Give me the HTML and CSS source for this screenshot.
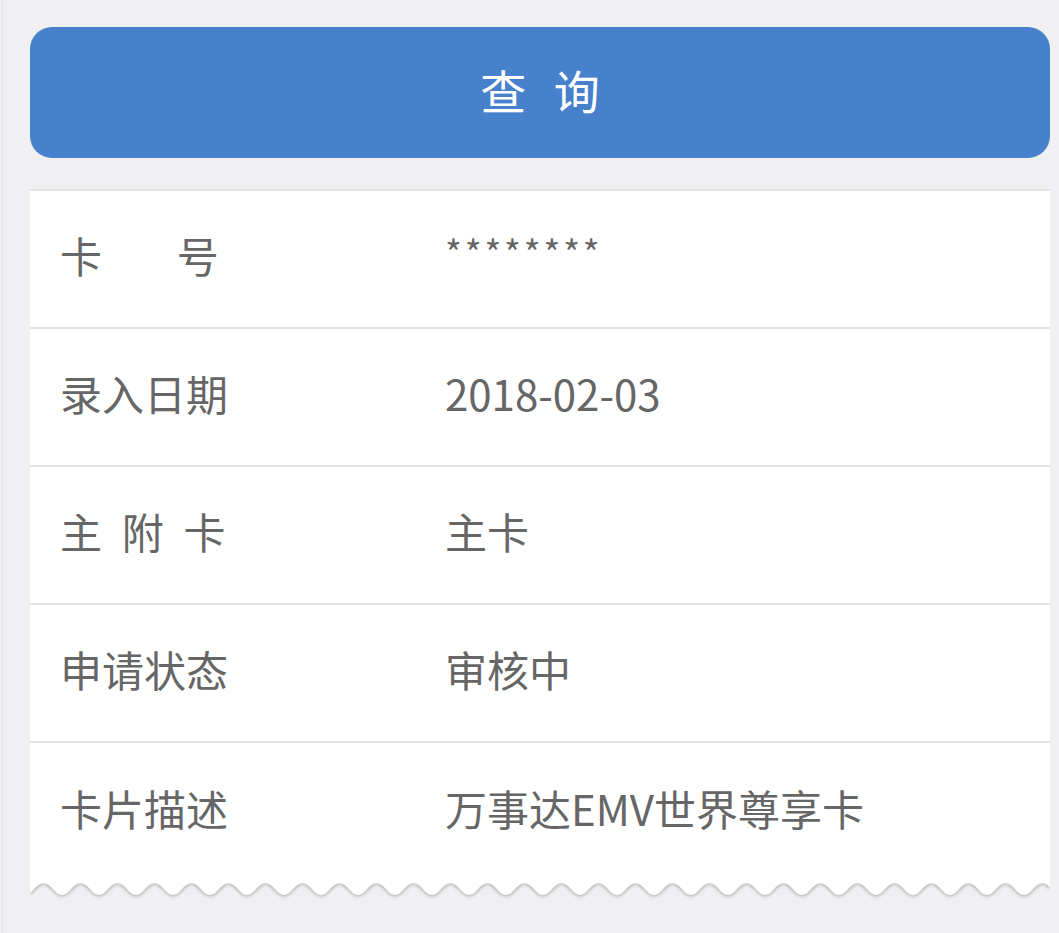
FILE: index.html
```html
<!DOCTYPE html>
<html lang="zh-CN">
<head>
  <meta charset="UTF-8" />
  <meta name="viewport" content="width=device-width, initial-scale=1.0"/>
  <title>申请进度查询</title>
  <link rel="stylesheet" href="styles.css">
</head>
<body>
  <div class="page">

    <button class="query-btn">查询</button>

    <!-- Result card -->
    <div class="card">
      <div class="row">
        <span class="label label-wide">卡号</span>
        <span class="value value-stars">********</span>
      </div>
      <div class="row">
        <span class="label">录入日期</span>
        <span class="value">2018-02-03</span>
      </div>
      <div class="row">
        <span class="label label-mid">主附卡</span>
        <span class="value">主卡</span>
      </div>
      <div class="row">
        <span class="label">申请状态</span>
        <span class="value">审核中</span>
      </div>
      <div class="row last">
        <span class="label">卡片描述</span>
        <span class="value">万事达EMV世界尊享卡</span>
      </div>

      <!-- zigzag receipt edge -->
      <svg class="wave" width="1020" height="26" viewBox="0 0 1020 26" preserveAspectRatio="none">
        <defs>
          <filter id="blur" x="-5%" y="-50%" width="110%" height="200%">
            <feGaussianBlur stdDeviation="1.5"/>
          </filter>
          <pattern id="waveFill" x="-5" width="37" height="26" patternUnits="userSpaceOnUse">
            <path d="M0 0 H37 V14 C30 14 26 2 18.5 2 C11 2 7 14 0 14 Z" fill="#fff"/>
          </pattern>
          <pattern id="waveShade" x="-5" width="37" height="26" patternUnits="userSpaceOnUse">
            <path d="M0 14 C7 14 11 2 18.5 2 C26 2 30 14 37 14" fill="none" stroke="#b8b8ba" stroke-width="3.5"/>
          </pattern>
        </defs>
        <rect x="0" y="2" width="1020" height="24" fill="url(#waveShade)" filter="url(#blur)"/>
        <rect x="0" y="0" width="1020" height="26" fill="url(#waveFill)"/>
      </svg>
    </div>

  </div>
</body>
</html>
```

FILE: styles.css
```css
body {
  margin: 0;
  background: #f0f0f2;
  font-family: "Noto Sans CJK SC", "Noto Sans", sans-serif;
}

.page {
  margin-left: 2px;
  border-left: 1px solid #e2e2e4;
  min-height: 933px;
  padding: 27px 9px 0 27px;
  box-sizing: border-box;
}

.query-btn {
  display: block;
  width: 1020px;
  height: 131px;
  padding: 0 0 8px;
  border: none;
  border-radius: 22px;
  background: #4780cb;
  color: #fff;
  font-family: inherit;
  font-size: 46px;
  letter-spacing: 0.6em;
  text-indent: 0.6em;
  cursor: pointer;
}

.card {
  margin-top: 31px;
  width: 1020px;
  background: #fff;
  border-top: 2px solid #e3e3e5;
}

.row {
  display: flex;
  align-items: center;
  height: 138px;
  padding: 0 0 10px 30px;
  box-sizing: border-box;
  border-bottom: 2px solid #e3e3e5;
  font-size: 42px;
  color: #666;
}

.row.last {
  border-bottom: none;
  height: 138px;
  padding-bottom: 10px;
}

.label {
  width: 385px;
  flex-shrink: 0;
}

.label-wide {
  letter-spacing: 1.78em;
}

.label-mid {
  letter-spacing: 0.47em;
}

.value-stars {
  font-size: 36px;
  letter-spacing: 0.08em;
  align-self: flex-start;
  margin-top: 34px;
}

.wave {
  display: block;
  background: #f0f0f2;
}
```
